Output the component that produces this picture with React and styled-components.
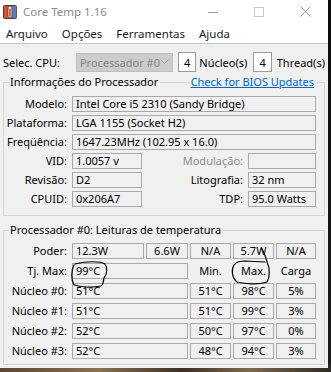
import React from 'react';
import styled, { createGlobalStyle } from 'styled-components';

const Global = createGlobalStyle`
  html, body { margin: 0; padding: 0; background: #111; }
  body { font-family: "Noto Sans", "Open Sans", sans-serif; font-size: 11px; color: #000; }
  * { box-sizing: border-box; }
`;

const Desktop = styled.div`
  width: 331px;
  height: 372px;
  overflow: hidden;
  background:
    linear-gradient(to bottom, #0c0c0c 0, #1a1a1a 360px, transparent 368px),
    linear-gradient(to right, #5a4632, #8a7253 30%, #3b2f24 55%, #7d6a4e 75%, #2e2a26);
`;

const Window = styled.div`
  position: relative;
  width: 328px;
  height: 368px;
  background: #f0f0f0;
  display: flex;
  flex-direction: column;
`;

const TitleBar = styled.div`
  height: 23px;
  background: #fff;
  display: flex;
  align-items: center;
`;

const AppIcon = styled.svg`
  margin-left: 3px;
  flex: none;
`;

const TitleText = styled.span`
  margin-left: 6px;
  font-size: 11.5px;
  color: #8a8a8a;
`;

const Controls = styled.div`
  margin-left: auto;
  display: flex;
  height: 100%;
`;

const CtrlButton = styled.div`
  width: 46px;
  height: 100%;
  display: flex;
  align-items: center;
  justify-content: center;
`;

const MenuBar = styled.div`
  height: 21px;
  background: #fff;
  border-bottom: 1px solid #c6c6c6;
  display: flex;
  align-items: center;
`;

const MenuItem = styled.span`
  padding: 0 7px 0 ${(p) => (p.$first ? 6 : 7)}px;
  font-size: 11.5px;
  color: #1a1a1a;
`;

const Content = styled.div`
  padding: 0 3px;
  display: flex;
  flex-direction: column;
`;

const CpuRow = styled.div`
  margin-top: 8px;
  height: 20px;
  display: flex;
  align-items: center;
  white-space: nowrap;
`;

const CpuLabel = styled.span`
  margin-right: 16px;
`;

const Combo = styled.div`
  width: 100px;
  height: 19px;
  background: #cccccc;
  border: 1px solid #bfbfbf;
  color: #838383;
  display: flex;
  align-items: center;
  padding-left: 3px;
  padding-right: 3px;
  justify-content: space-between;
  overflow: hidden;
`;

const ComboChevron = styled.svg`
  flex: none;
`;

const NumBox = styled.div`
  width: 19px;
  height: 20px;
  background: #fff;
  border: 1px solid #9c9c9c;
  display: flex;
  align-items: center;
  justify-content: center;
  margin: 0 ${(p) => p.$mr}px 0 ${(p) => p.$ml}px;
`;

const GroupBox = styled.div`
  margin-top: ${(p) => p.$mt}px;
  display: flex;
  flex-direction: column;
`;

const GroupHeader = styled.div`
  height: 14px;
  display: flex;
  align-items: center;
  white-space: nowrap;
`;

const Edge = styled.div`
  align-self: flex-end;
  height: 7px;
  width: ${(p) => p.$w || 0}px;
  flex: ${(p) => (p.$fill ? '1' : 'none')};
  border-top: 1px solid #d5d5d5;
  border-left: ${(p) => (p.$left ? '1px solid #d5d5d5' : 'none')};
  border-right: ${(p) => (p.$right ? '1px solid #d5d5d5' : 'none')};
`;

const Legend = styled.span`
  padding: 0 2px 0 1px;
  line-height: 14px;
`;

const Link = styled.span`
  color: #0066cc;
  text-decoration: underline;
  padding: 0 2px;
  line-height: 14px;
`;

const GroupBody = styled.div`
  border: 1px solid #d5d5d5;
  border-top: none;
  padding: ${(p) => p.$pt}px 8px ${(p) => p.$pb}px 0;
`;

const InfoGrid = styled.div`
  display: grid;
  grid-template-columns: 63px 70px 1fr 68px;
  column-gap: 5px;
  row-gap: 3px;
  grid-auto-rows: 16px;
`;

const TempGrid = styled.div`
  display: grid;
  grid-template-columns: 68px 74px 44px 43px 43px 40px;
  row-gap: 4px;
  grid-auto-rows: 16px;
`;

const Label = styled.div`
  text-align: right;
  line-height: 16px;
  white-space: nowrap;
  color: ${(p) => (p.$disabled ? '#8d8d8d' : '#000')};
  padding-right: ${(p) => p.$pr || 0}px;
`;

const Field = styled.div`
  grid-column: ${(p) => p.$span || 'auto'};
  width: ${(p) => (p.$gap ? `calc(100% - ${p.$gap}px)` : '100%')};
  height: 16px;
  border: 1px solid #a9a9a9;
  line-height: 14px;
  padding: 0 3px;
  white-space: nowrap;
  overflow: hidden;
  text-align: ${(p) => (p.$center ? 'center' : 'left')};
`;

const Caption = styled.div`
  width: ${(p) => (p.$gap ? `calc(100% - ${p.$gap}px)` : '100%')};
  line-height: 16px;
  text-align: center;
`;

const Annotations = styled.svg`
  position: absolute;
  left: 0;
  top: 0;
  pointer-events: none;
`;

const cores = [
  ['Núcleo #0:', '51°C', '51°C', '98°C', '5%'],
  ['Núcleo #1:', '51°C', '51°C', '99°C', '3%'],
  ['Núcleo #2:', '52°C', '50°C', '97°C', '0%'],
  ['Núcleo #3:', '52°C', '48°C', '94°C', '3%'],
];

export default function App() {
  return (
    <>
      <Global />
      <Desktop>
        <Window>
          <TitleBar>
            <AppIcon width="14" height="14" viewBox="0 0 14 14">
              <rect x="0.5" y="0.5" width="13" height="13" rx="1" fill="#d9542a" stroke="#6a3320" />
              <rect x="7.5" y="1" width="6" height="12" fill="#5a7fc0" />
              <rect x="5" y="1" width="4" height="12" rx="2" fill="#f2f2f2" stroke="#3a3a3a" strokeWidth="0.8" />
              <line x1="7" y1="3.5" x2="7" y2="11.5" stroke="#d42020" strokeWidth="1.4" />
            </AppIcon>
            <TitleText>Core Temp 1.16</TitleText>
            <Controls>
              <CtrlButton>
                <svg width="10" height="10" viewBox="0 0 10 10">
                  <line x1="0" y1="5.5" x2="10" y2="5.5" stroke="#9a9a9a" strokeWidth="1" />
                </svg>
              </CtrlButton>
              <CtrlButton>
                <svg width="10" height="10" viewBox="0 0 10 10">
                  <rect x="0.5" y="0.5" width="9" height="9" fill="none" stroke="#c8c8c8" strokeWidth="1" />
                </svg>
              </CtrlButton>
              <CtrlButton>
                <svg width="11" height="11" viewBox="0 0 11 11">
                  <path d="M0.5 0.5 L10.5 10.5 M10.5 0.5 L0.5 10.5" stroke="#9a9a9a" strokeWidth="1" />
                </svg>
              </CtrlButton>
            </Controls>
          </TitleBar>
          <MenuBar>
            <MenuItem $first>Arquivo</MenuItem>
            <MenuItem>Opções</MenuItem>
            <MenuItem>Ferramentas</MenuItem>
            <MenuItem>Ajuda</MenuItem>
          </MenuBar>
          <Content>
            <CpuRow>
              <CpuLabel>Selec. CPU:</CpuLabel>
              <Combo>
                <span>Processador #0</span>
                <ComboChevron width="9" height="6" viewBox="0 0 9 6">
                  <path d="M0.5 0.5 L4.5 4.5 L8.5 0.5" fill="none" stroke="#a0a0a0" strokeWidth="1" />
                </ComboChevron>
              </Combo>
              <NumBox $ml={5} $mr={3}>4</NumBox>
              <span>Núcleo(s)</span>
              <NumBox $ml={6} $mr={5}>4</NumBox>
              <span>Thread(s)</span>
            </CpuRow>

            <GroupBox $mt={3}>
              <GroupHeader>
                <Edge $w={6} $left />
                <Legend>Informações do Processador</Legend>
                <Edge $fill />
                <Link>Check for BIOS Updates</Link>
                <Edge $w={9} $right />
              </GroupHeader>
              <GroupBody $pt={7} $pb={8}>
                <InfoGrid>
                  <Label>Modelo:</Label>
                  <Field $span="2 / -1">Intel Core i5 2310 (Sandy Bridge)</Field>
                  <Label>Plataforma:</Label>
                  <Field $span="2 / -1">LGA 1155 (Socket H2)</Field>
                  <Label>Freqüência:</Label>
                  <Field $span="2 / -1">1647.23MHz (102.95 x 16.0)</Field>
                  <Label>VID:</Label>
                  <Field>1.0057 v</Field>
                  <Label $disabled>Modulação:</Label>
                  <Field></Field>
                  <Label>Revisão:</Label>
                  <Field>D2</Field>
                  <Label>Litografia:</Label>
                  <Field>32 nm</Field>
                  <Label>CPUID:</Label>
                  <Field>0x206A7</Field>
                  <Label>TDP:</Label>
                  <Field>95.0 Watts</Field>
                </InfoGrid>
              </GroupBody>
            </GroupBox>

            <GroupBox $mt={7}>
              <GroupHeader>
                <Edge $w={6} $left />
                <Legend>Processador #0: Leituras de temperatura</Legend>
                <Edge $fill $right />
              </GroupHeader>
              <GroupBody $pt={6} $pb={5}>
                <TempGrid>
                  <Label $pr={5}>Poder:</Label>
                  <Field $gap={2}>12.3W</Field>
                  <Field $gap={2} $center>6.6W</Field>
                  <Field $gap={2} $center>N/A</Field>
                  <Field $gap={2} $center>5.7W</Field>
                  <Field $center>N/A</Field>

                  <Label $pr={5}>Tj. Max:</Label>
                  <Field $span="span 2" $gap={2}>99°C</Field>
                  <Caption $gap={2}>Min.</Caption>
                  <Caption $gap={2}>Max.</Caption>
                  <Caption>Carga</Caption>

                  {cores.map(([name, cur, min, max, load]) => (
                    <React.Fragment key={name}>
                      <Label $pr={5}>{name}</Label>
                      <Field $span="span 2" $gap={2}>{cur}</Field>
                      <Field $gap={2} $center>{min}</Field>
                      <Field $gap={2} $center>{max}</Field>
                      <Field $center>{load}</Field>
                    </React.Fragment>
                  ))}
                </TempGrid>
              </GroupBody>
            </GroupBox>
          </Content>
          <Annotations width="328" height="368" viewBox="0 0 328 368">
            <path
              d="M75 264 C86 261 100 261 105 264 C108 268 107 274 104 278 C103 281 104 284 101 286 C92 288 80 287 74 285 C71 280 71 270 74 265"
              fill="none" stroke="#000" strokeWidth="1.2" strokeLinecap="round"
            />
            <path
              d="M262 249 C264 253 266 257 267 262 C270 268 270 277 267 282 C258 285 245 284 237 282 C232 278 231 270 234 265 C236 262 240 261 245 261 L265 262"
              fill="none" stroke="#000" strokeWidth="1.2" strokeLinecap="round"
            />
          </Annotations>
        </Window>
      </Desktop>
    </>
  );
}
